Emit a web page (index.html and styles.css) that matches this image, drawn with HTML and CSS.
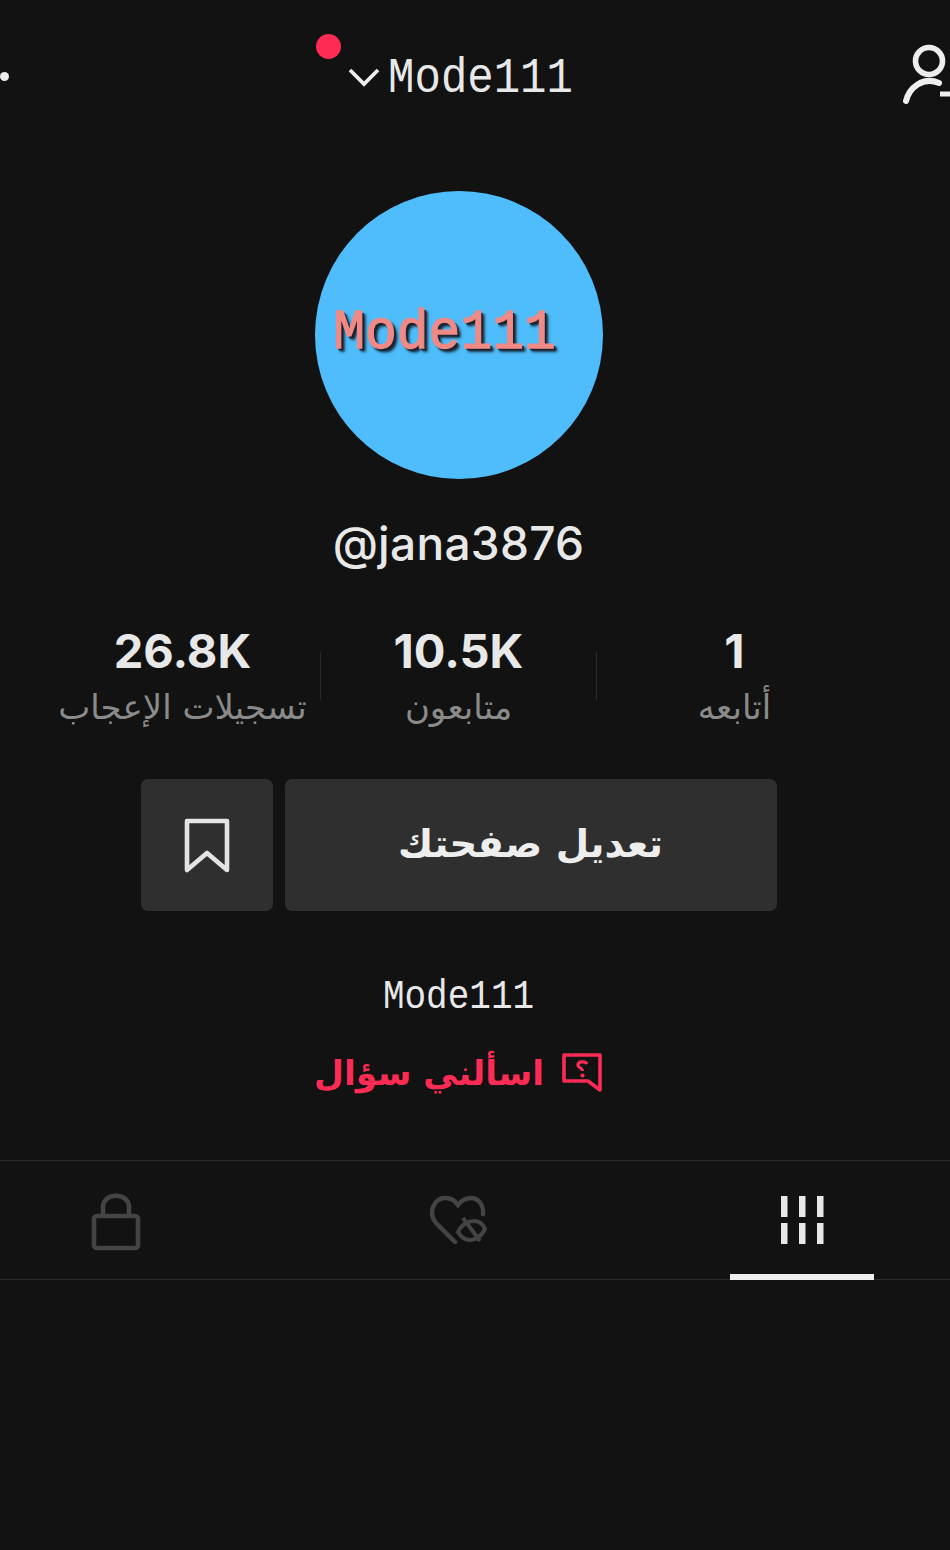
FILE: index.html
```html
<!DOCTYPE html>
<html lang="ar">
<head>
<meta charset="utf-8">
<title>Mode111</title>
<link rel="stylesheet" href="styles.css">
</head>
<body>
<div class="page">
  <header class="topbar">
    <span class="more-dot"></span>
    <div class="account">
      <span class="notify-dot"></span>
      <svg class="chevron" width="34" height="22" viewBox="0 0 34 22"><path d="M3 4 L17 18 L31 4" fill="none" stroke="#eee" stroke-width="3.8"/></svg>
      <span class="account-name">Mode111</span>
    </div>
    <svg class="user-icon" width="50" height="64" viewBox="0 0 50 64"><circle cx="29" cy="17" r="13.500" fill="none" stroke="#eee" stroke-width="5.600"/><path d="M6 57 C9 44 23 32 39 39" fill="none" stroke="#eee" stroke-width="6" stroke-linecap="round"/><path d="M40 50 H50" stroke="#eee" stroke-width="5"/></svg>
  </header>

  <main class="profile">
    <div class="avatar"><span class="avatar-text">Mode111</span></div>
    <div class="handle">@jana3876</div>

    <section class="stats">
      <div class="stat"><strong class="stat-num">26.8K</strong><span class="stat-label">تسجيلات الإعجاب</span></div>
      <div class="stat stat-mid"><strong class="stat-num">10.5K</strong><span class="stat-label">متابعون</span></div>
      <div class="stat"><strong class="stat-num">1</strong><span class="stat-label">أتابعه</span></div>
    </section>

    <section class="actions">
      <button class="btn btn-icon" type="button">
        <svg width="46" height="56" viewBox="0 0 46 56"><path d="M3 4 H43 V53 L23 36 L3 53 Z" fill="none" stroke="#e4e4e4" stroke-width="4.6" stroke-linejoin="round"/></svg>
      </button>
      <button class="btn btn-edit" type="button">تعديل صفحتك</button>
    </section>

    <p class="bio">Mode111</p>

    <a class="ask" href="#">
      <svg width="42" height="42" viewBox="0 0 42 42"><path d="M3 3 H39 V38 L27 29 H3 Z" fill="none" stroke="#fe2c55" stroke-width="3.6" stroke-linejoin="round"/><path d="M26 12 C24 8.500 16 9.500 17 13.500 C18 16.500 21.500 15.500 21.500 19" fill="none" stroke="#fe2c55" stroke-width="3.2"/><circle cx="21.500" cy="23.500" r="2.100" fill="#fe2c55"/></svg>
      <span>اسألني سؤال</span>
    </a>
  </main>

  <nav class="tabs">
    <div class="tabs-inner">
      <div class="tab">
        <svg width="52" height="60" viewBox="0 0 52 60"><rect x="4" y="23" width="44" height="32" rx="3" fill="none" stroke="#444" stroke-width="4.6"/><path d="M13 23 V14 C13 -1 39 -1 39 14 V23" fill="none" stroke="#444" stroke-width="4.6"/></svg>
      </div>
      <div class="tab">
        <svg width="58" height="54" viewBox="0 0 58 54"><path d="M25 49 L6 30 C-3 19 5 4 16 5 C22 5 26 9 28 12 C31 8 36 5 41 5 C49 5 54 13 53 21" fill="none" stroke="#444" stroke-width="4.4" stroke-linecap="round"/><path d="M28 39 C32 31 38 28 44 28 C49 28 53 31 55 36 C51 44 45 47 40 47 C35 47 31 44 28 39 Z" fill="none" stroke="#444" stroke-width="4"/><path d="M33 25 L50 48" stroke="#444" stroke-width="4"/></svg>
      </div>
      <div class="tab tab-active">
        <svg width="44" height="50" viewBox="0 0 44 50"><g fill="#e8e8e8"><rect x="1" y="1" width="6.500" height="21"/><rect x="19" y="1" width="6.500" height="21"/><rect x="37" y="1" width="6.500" height="21"/><rect x="1" y="28" width="6.500" height="21"/><rect x="19" y="28" width="6.500" height="21"/><rect x="37" y="28" width="6.500" height="21"/></g></svg>
      </div>
    </div>
  </nav>
</div>
</body>
</html>
```
FILE: styles.css
```css
* { box-sizing: border-box; }
html, body { margin: 0; padding: 0; background: #121212; }
body { font-family: Inter, "DejaVu Sans", sans-serif; color: #eee; }
.page { width: 950px; height: 1550px; overflow: hidden; position: relative; background: #121212; }

.topbar { height: 152px; display: flex; align-items: flex-start; justify-content: center; position: relative; padding-right: 40px; }
.more-dot { position: absolute; left: 0; top: 72px; width: 9px; height: 9px; border-radius: 50%; background: #eee; }
.account { display: flex; align-items: center; gap: 7px; margin-top: 52px; position: relative; height: 50px; margin-left: 10px; }
.notify-dot { position: absolute; left: -31px; top: -18px; width: 25px; height: 25px; border-radius: 50%; background: #fe2c55; }
.chevron { display: block; }
.account-name { display: inline-block; font-family: "Liberation Mono", monospace; font-size: 44px; line-height: 50px; color: #e8e8e8; transform: translateY(1px) scaleY(1.13); }
.user-icon { position: absolute; right: 0; top: 44px; }

.profile { width: 917px; display: flex; flex-direction: column; align-items: center; }
.avatar { width: 288px; height: 288px; margin-top: 39px; border-radius: 50%; background: #4fbdfb; display: flex; align-items: center; justify-content: center; padding: 0 28px 0 0; }
.avatar-text { display: inline-block; font-family: "Liberation Mono", monospace; font-weight: 400; font-size: 53px; line-height: 60px; color: #f08a86; -webkit-text-stroke: 1.2px #f08a86; text-shadow: 2px 2px 0 #1c2430, 3px 3px 2px #1c2430, 4px 4px 3px #24506e; margin-bottom: 5px; transform: scaleY(1.05); }
.handle { margin-top: 34px; height: 60px; font-size: 46px; line-height: 60px; font-weight: 500; color: #e8e8e8; letter-spacing: 0.3px; }

.stats { margin-top: 50px; display: grid; grid-template-columns: repeat(3, 276px); }
.stat { display: flex; flex-direction: column; align-items: center; position: relative; }
.stat-mid::before, .stat-mid::after { content: ""; position: absolute; top: 29px; height: 48px; width: 1px; background: #2a2a2a; }
.stat-mid::before { left: -1px; }
.stat-mid::after { right: 0; }
.stat-num { font-size: 47px; line-height: 56px; font-weight: 700; color: #e8e8e8; }
.stat-label { margin-top: 5px; font-size: 34px; line-height: 46px; color: #8a8a8a; font-family: "DejaVu Sans", sans-serif; }

.actions { margin-top: 49px; display: flex; gap: 12px; }
.btn { height: 132px; border: 0; border-radius: 7px; background: #2f2f2f; color: #eee; display: flex; align-items: center; justify-content: center; padding: 0 0 4px; font-family: "DejaVu Sans", sans-serif; }
.btn-icon { width: 132px; padding: 0; }
.btn-edit { width: 492px; font-size: 38.500px; font-weight: 700; }

.bio { margin: 62px 0 0; height: 50px; font-family: "Liberation Mono", monospace; font-size: 36px; line-height: 50px; color: #e8e8e8; transform: scaleY(1.15); }
.ask { margin-top: 28px; display: flex; align-items: center; gap: 17px; flex-direction: row-reverse; color: #fe2c55; text-decoration: none; font-size: 34.500px; font-weight: 700; line-height: 44px; font-family: "DejaVu Sans", sans-serif; }

.tabs { position: absolute; left: 0; top: 1160px; width: 950px; height: 120px; border-top: 1px solid #2c2c2c; border-bottom: 1px solid #2c2c2c; }
.tabs-inner { width: 917px; height: 100%; display: grid; grid-template-columns: repeat(3, 343px); justify-content: center; }
.tab { display: flex; align-items: flex-start; justify-content: center; padding-top: 32px; position: relative; }
.tab-active { padding-top: 34px; }
.tab-active::after { content: ""; position: absolute; left: 100px; bottom: -1px; width: 144px; height: 6px; background: #eee; }
```
